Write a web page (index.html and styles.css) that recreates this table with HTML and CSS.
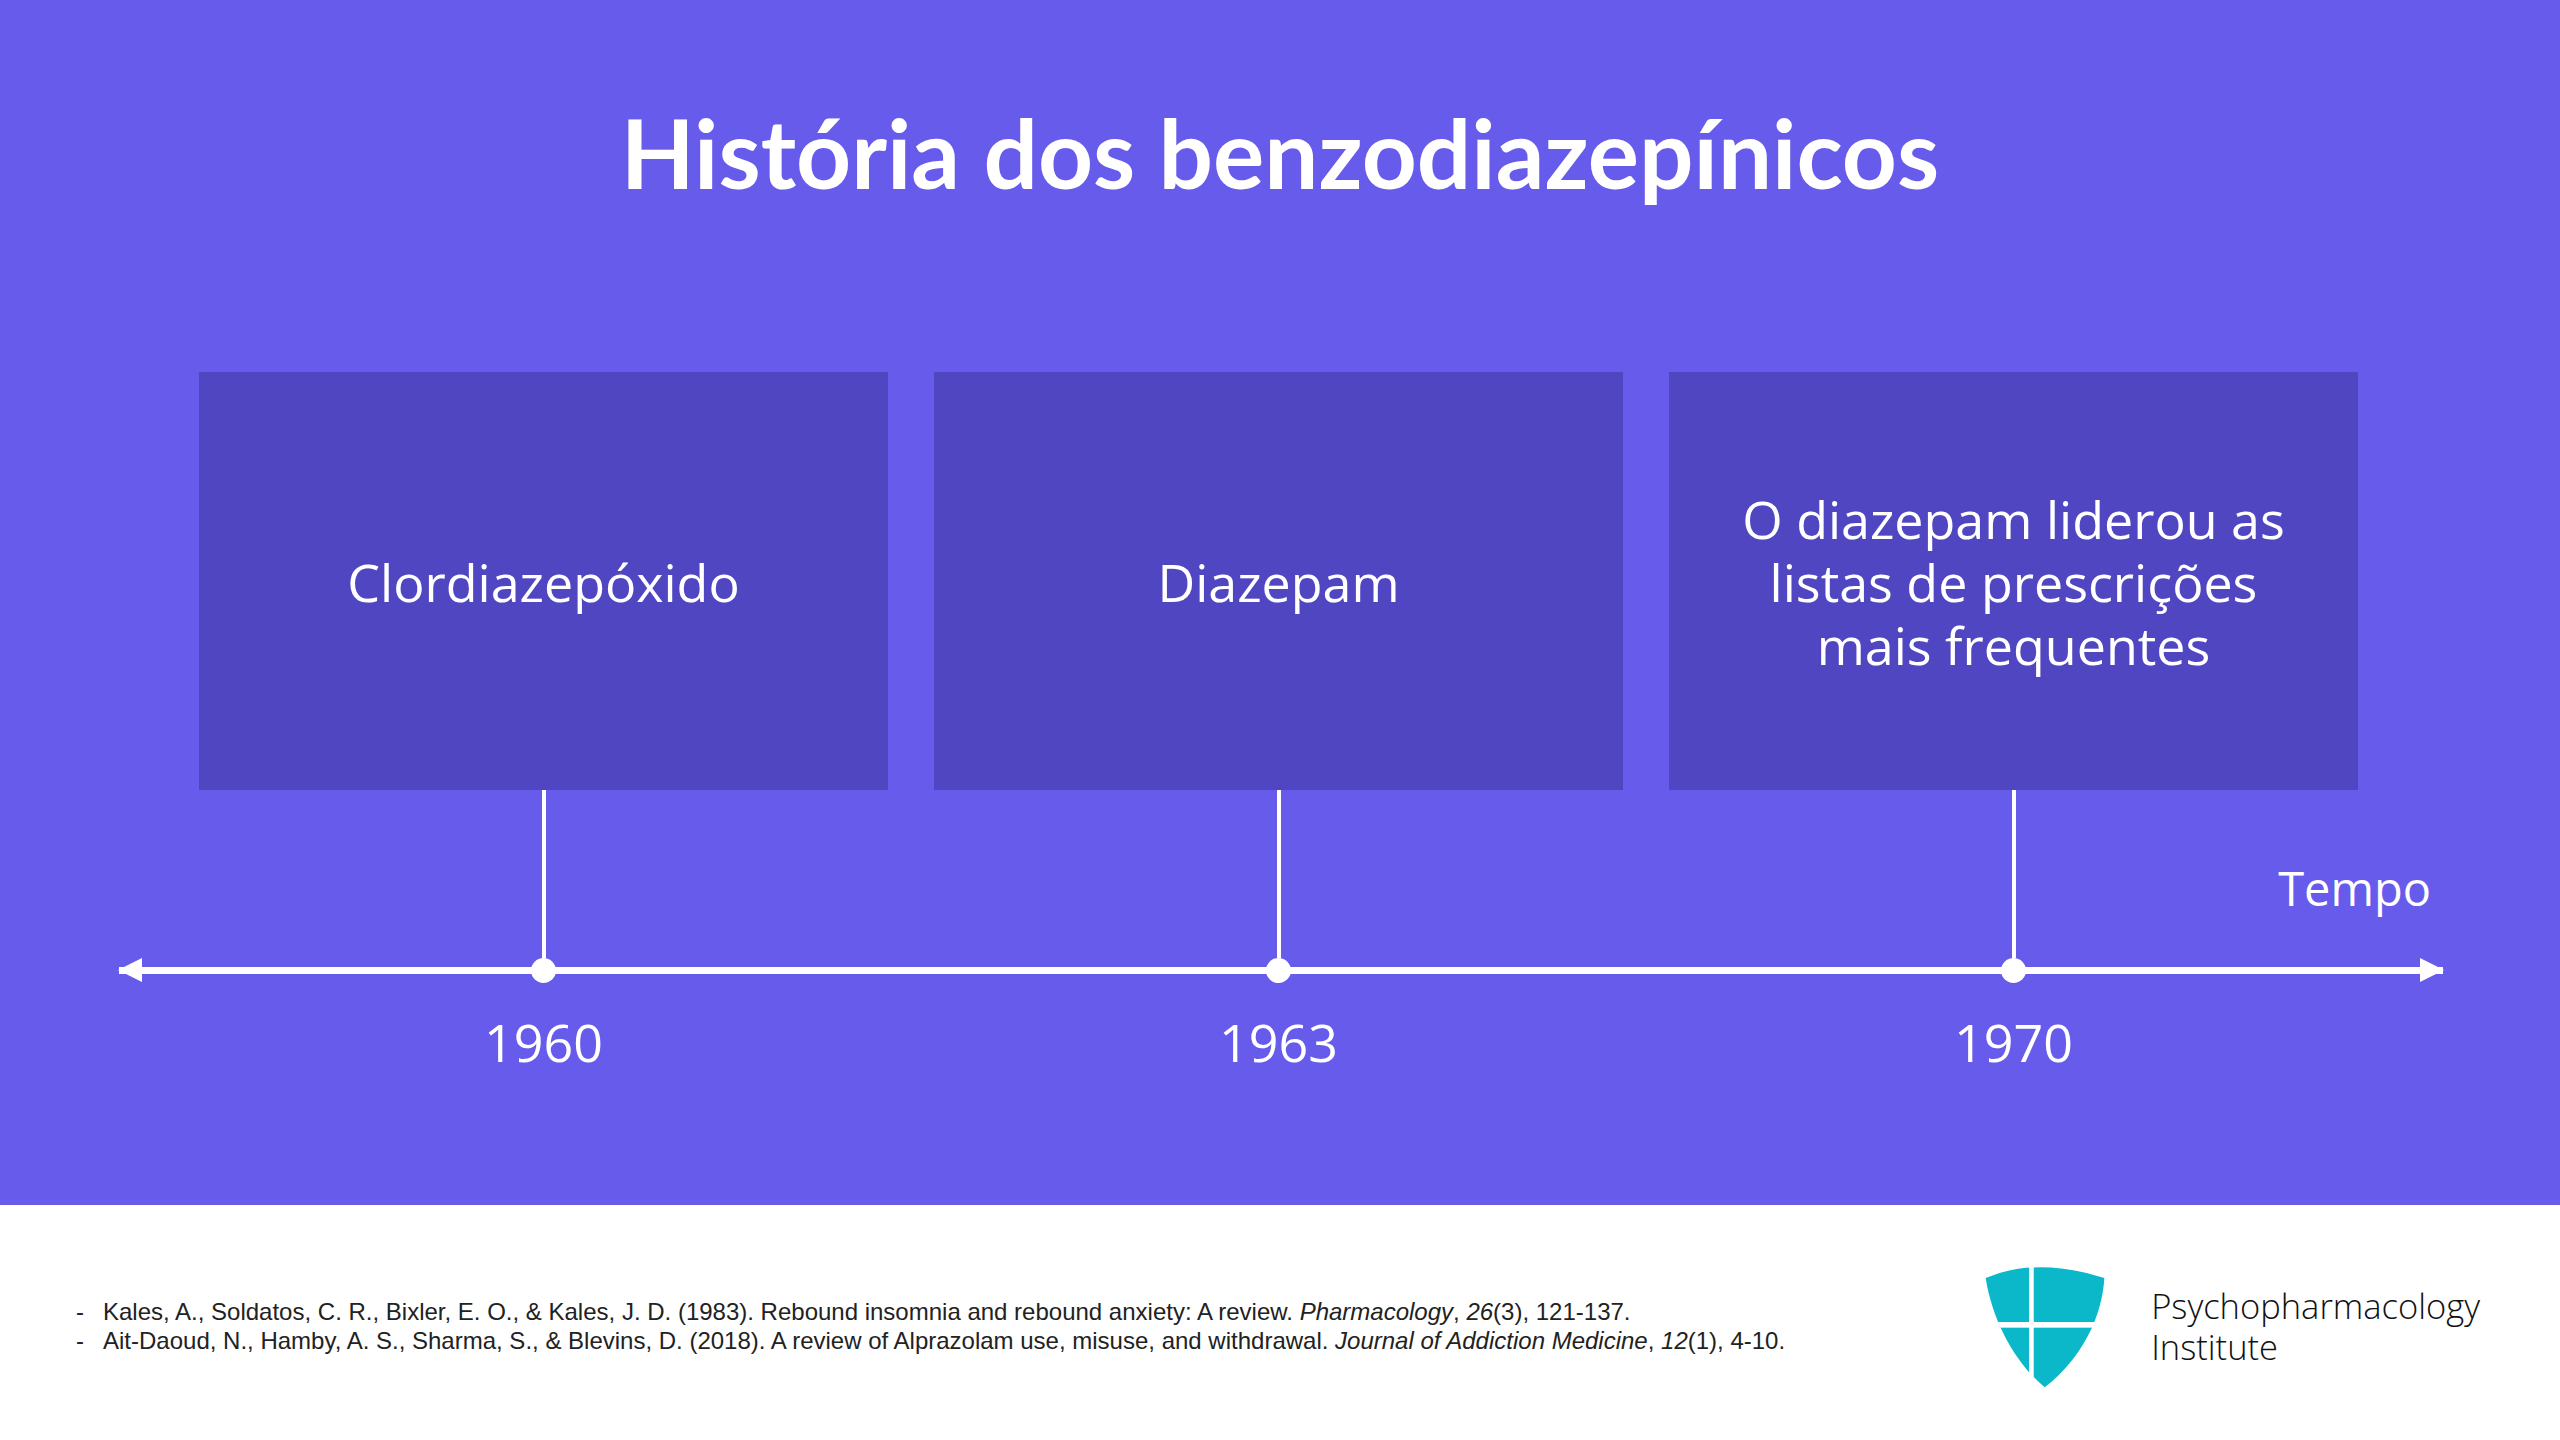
FILE: index.html
```html
<!DOCTYPE html>
<html lang="pt">
<head>
<meta charset="utf-8">
<title>História dos benzodiazepínicos</title>
<link rel="stylesheet" href="styles.css">
</head>
<body>
<main class="page">
  <section class="slide">
    <h1 class="title">História dos benzodiazepínicos</h1>
    <div class="timeline">
      <div class="axis"><span class="arrow arrow-left"></span><span class="arrow arrow-right"></span></div>
      <div class="tempo">Tempo</div>
      <div class="events">
        <div class="event">
          <div class="card"><p class="card-text">Clordiazepóxido</p></div>
          <div class="stem"></div>
          <div class="dot"></div>
          <div class="year">1960</div>
        </div>
        <div class="event">
          <div class="card"><p class="card-text">Diazepam</p></div>
          <div class="stem"></div>
          <div class="dot"></div>
          <div class="year">1963</div>
        </div>
        <div class="event">
          <div class="card"><p class="card-text">O diazepam liderou as listas de prescrições mais frequentes</p></div>
          <div class="stem"></div>
          <div class="dot"></div>
          <div class="year">1970</div>
        </div>
      </div>
    </div>
  </section>
  <footer class="footer">
    <ul class="refs">
      <li>Kales, A., Soldatos, C. R., Bixler, E. O., &amp; Kales, J. D. (1983). Rebound insomnia and rebound anxiety: A review. <i>Pharmacology</i>, <i>26</i>(3), 121-137.</li>
      <li>Ait-Daoud, N., Hamby, A. S., Sharma, S., &amp; Blevins, D. (2018). A review of Alprazolam use, misuse, and withdrawal. <i>Journal of Addiction Medicine</i>, <i>12</i>(1), 4-10.</li>
    </ul>
    <div class="logo">
      <svg class="shield" viewBox="90 90 375 380" width="127" height="126" aria-hidden="true">
        <path d="M97,135 Q250,70 455,135 C448,250 390,375 275,465 C190,395 118,270 97,135 Z" fill="#0bb8c9"/>
        <rect x="228" y="85" width="14" height="390" fill="#fff"/>
        <rect x="90" y="268" width="380" height="17" fill="#fff"/>
        <path d="M235,252 Q238,272 258,276 Q238,280 235,300 Q232,280 212,276 Q232,272 235,252 Z" fill="#fff"/>
      </svg>
      <div class="logo-text"><span class="logo-line">Psychopharmacology</span><span class="logo-line">Institute</span></div>
    </div>
  </footer>
</main>
</body>
</html>
```

FILE: styles.css
```css
html, body {
  margin: 0;
  padding: 0;
}

body {
  width: 2560px;
  height: 1440px;
  overflow: hidden;
  background: #ffffff;
  font-family: "Open Sans", "Liberation Sans", sans-serif;
}

.page {
  display: flex;
  flex-direction: column;
  width: 2560px;
  height: 1440px;
}

.slide {
  height: 1205px;
  background: #675bec;
  display: flex;
  flex-direction: column;
  color: #ffffff;
}

.title {
  margin: 104px 0 0;
  font-family: "Lato", "Liberation Sans", sans-serif;
  font-weight: 700;
  font-size: 96px;
  line-height: 96px;
  text-align: center;
  letter-spacing: 0;
}

.timeline {
  position: relative;
  margin-top: 172px;
}

.axis {
  position: absolute;
  left: 119px;
  width: 2324px;
  top: 595px;
  height: 7px;
  background: #ffffff;
}

.arrow {
  position: absolute;
  top: -9px;
  width: 0;
  height: 0;
  border-top: 12px solid transparent;
  border-bottom: 12px solid transparent;
}

.arrow-left {
  left: -1px;
  border-right: 24px solid #ffffff;
}

.arrow-right {
  right: -1px;
  border-left: 24px solid #ffffff;
}

.tempo {
  position: absolute;
  right: 129px;
  top: 486px;
  font-size: 47px;
  line-height: 60px;
}

.events {
  position: relative;
  display: grid;
  grid-template-columns: repeat(3, 689px);
  column-gap: 46px;
  padding-left: 199px;
}

.event {
  display: flex;
  flex-direction: column;
  align-items: center;
}

.card {
  width: 689px;
  height: 418px;
  background: #5046c1;
  display: flex;
  align-items: center;
  justify-content: center;
}

.card-text {
  margin: 0;
  width: 560px;
  text-align: center;
  font-size: 52px;
  line-height: 63px;
}

.stem {
  width: 4px;
  height: 168px;
  background: #ffffff;
}

.dot {
  width: 25px;
  height: 25px;
  border-radius: 50%;
  background: #ffffff;
}

.year {
  margin-top: 28px;
  font-size: 52px;
  line-height: 62px;
}

.footer {
  flex: 1;
  display: flex;
  align-items: center;
  padding: 6px 80px 0 76px;
}

.refs {
  margin: 0;
  padding: 0;
  list-style: none;
  font-family: "Liberation Sans", Arial, sans-serif;
  font-size: 24px;
  line-height: 29px;
  color: #222222;
}

.refs li {
  padding-left: 27px;
  text-indent: -27px;
  white-space: nowrap;
}

.refs li::before {
  content: "-";
  display: inline-block;
  width: 27px;
  text-indent: 0;
}

.logo {
  margin-left: auto;
  display: flex;
  align-items: center;
  gap: 42px;
  margin-top: 0;
}

.shield {
  display: block;
}

.logo-text {
  display: flex;
  flex-direction: column;
  font-family: "Open Sans", sans-serif;
  font-weight: 300;
  font-size: 34.5px;
  line-height: 41px;
  color: #111111;
}
```
